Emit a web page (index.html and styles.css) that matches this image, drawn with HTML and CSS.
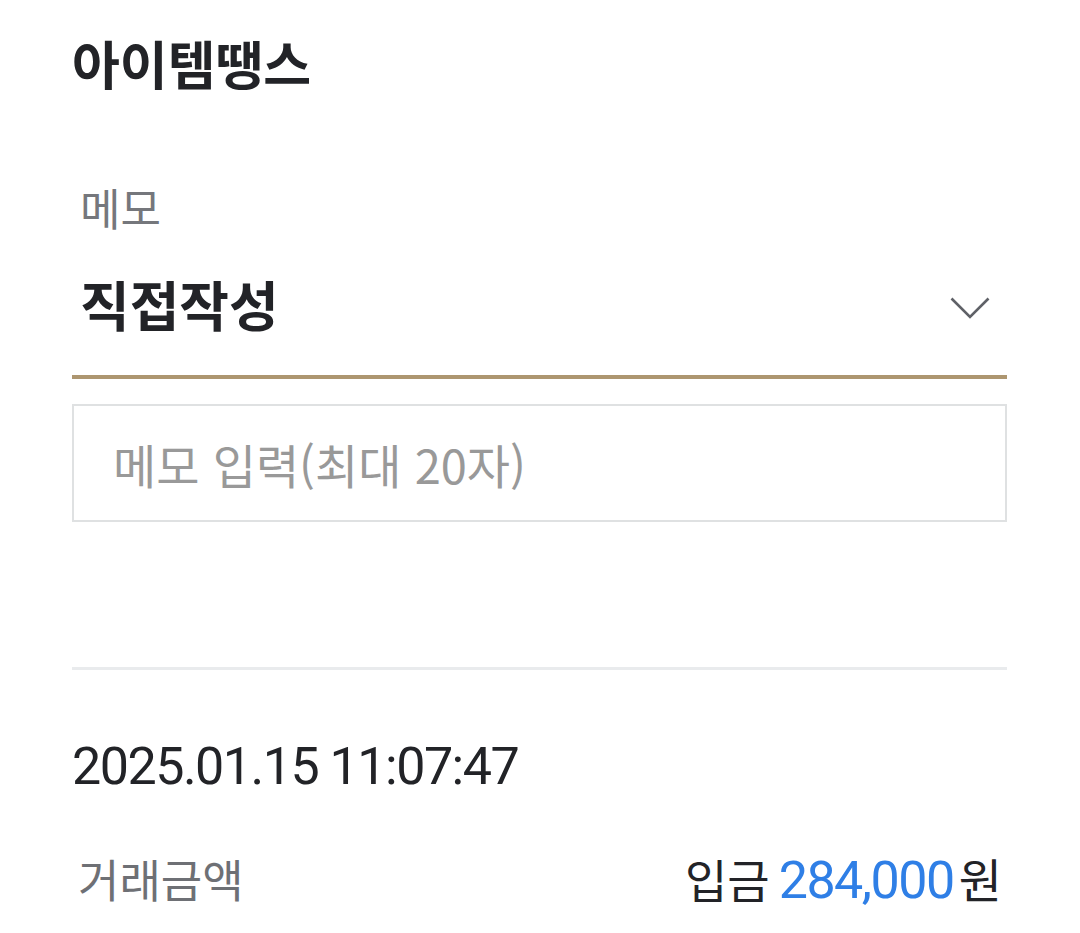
FILE: index.html
```html
<!DOCTYPE html>
<html lang="ko">
<head>
<meta charset="utf-8">
<link rel="stylesheet" href="styles.css">
</head>
<body>
<main class="page">
  <h1 class="title">아이템땡스</h1>
  <section class="memo">
    <div class="memo-label">메모</div>
    <div class="select">
      <span class="select-value">직접작성</span>
      <svg class="chevron" width="40" height="22" viewBox="0 0 40 22"><path d="M1.5 1.5 L20 20 L38.5 1.5" fill="none" stroke="#5f6167" stroke-width="2.6"/></svg>
    </div>
    <div class="memo-input">메모 입력(최대 20자)</div>
  </section>
  <hr class="divider">
  <div class="date">2025.01.15 11:07:47</div>
  <div class="amount-row">
    <span class="amount-label">거래금액</span>
    <span class="amount-value"><span class="kind">입금</span><span class="num">284,000</span><span class="unit">원</span></span>
  </div>
</main>
</body>
</html>
```
FILE: styles.css
```css
html, body {
  margin: 0;
  padding: 0;
  background: #ffffff;
}
body {
  font-family: "Noto Sans CJK KR", "Noto Sans", sans-serif;
  color: #222327;
}
.page {
  padding: 0 73px 0 72px;
}
.title {
  margin: 0;
  padding-top: 28px;
  font-size: 52px;
  font-weight: 700;
  line-height: 70px;
  color: #222327;
}
.memo {
  margin-top: 82px;
}
.memo-label {
  padding-left: 8px;
  font-size: 44px;
  line-height: 54px;
  color: #75777c;
}
.select {
  display: flex;
  align-items: center;
  justify-content: space-between;
  margin-top: 30px;
  height: 80px;
  padding: 0 17px 31px 8px;
  border-bottom: 4px solid #ad9670;
}
.select-value {
  font-size: 54px;
  font-weight: 700;
  line-height: 60px;
  color: #222327;
}
.chevron {
  margin-top: 8px;
}
.memo-input {
  margin-top: 25px;
  height: 114px;
  border: 2px solid #dfe1e2;
  padding-left: 39px;
  display: flex;
  align-items: center;
  font-size: 47px;
  color: #999999;
}
.divider {
  margin: 145px 0 0 0;
  border: 0;
  height: 3px;
  background: #e9ebed;
}
.date {
  margin-top: 67px;
  font-family: Roboto, sans-serif;
  font-size: 52px;
  line-height: 60px;
  letter-spacing: -1.5px;
  color: #222327;
}
.amount-row {
  display: flex;
  justify-content: space-between;
  align-items: baseline;
  margin-top: 51px;
  padding: 0 5px 0 6px;
  line-height: 60px;
}
.amount-label {
  font-size: 45px;
  color: #6e7075;
}
.amount-value {
  font-size: 46px;
  color: #222327;
}
.kind {
  margin-right: 9px;
}
.num {
  font-family: Roboto, sans-serif;
  font-size: 52px;
  letter-spacing: -1.5px;
  color: #2f7fe6;
  margin-right: 5px;
}
.unit {
  font-size: 47px;
}
```
